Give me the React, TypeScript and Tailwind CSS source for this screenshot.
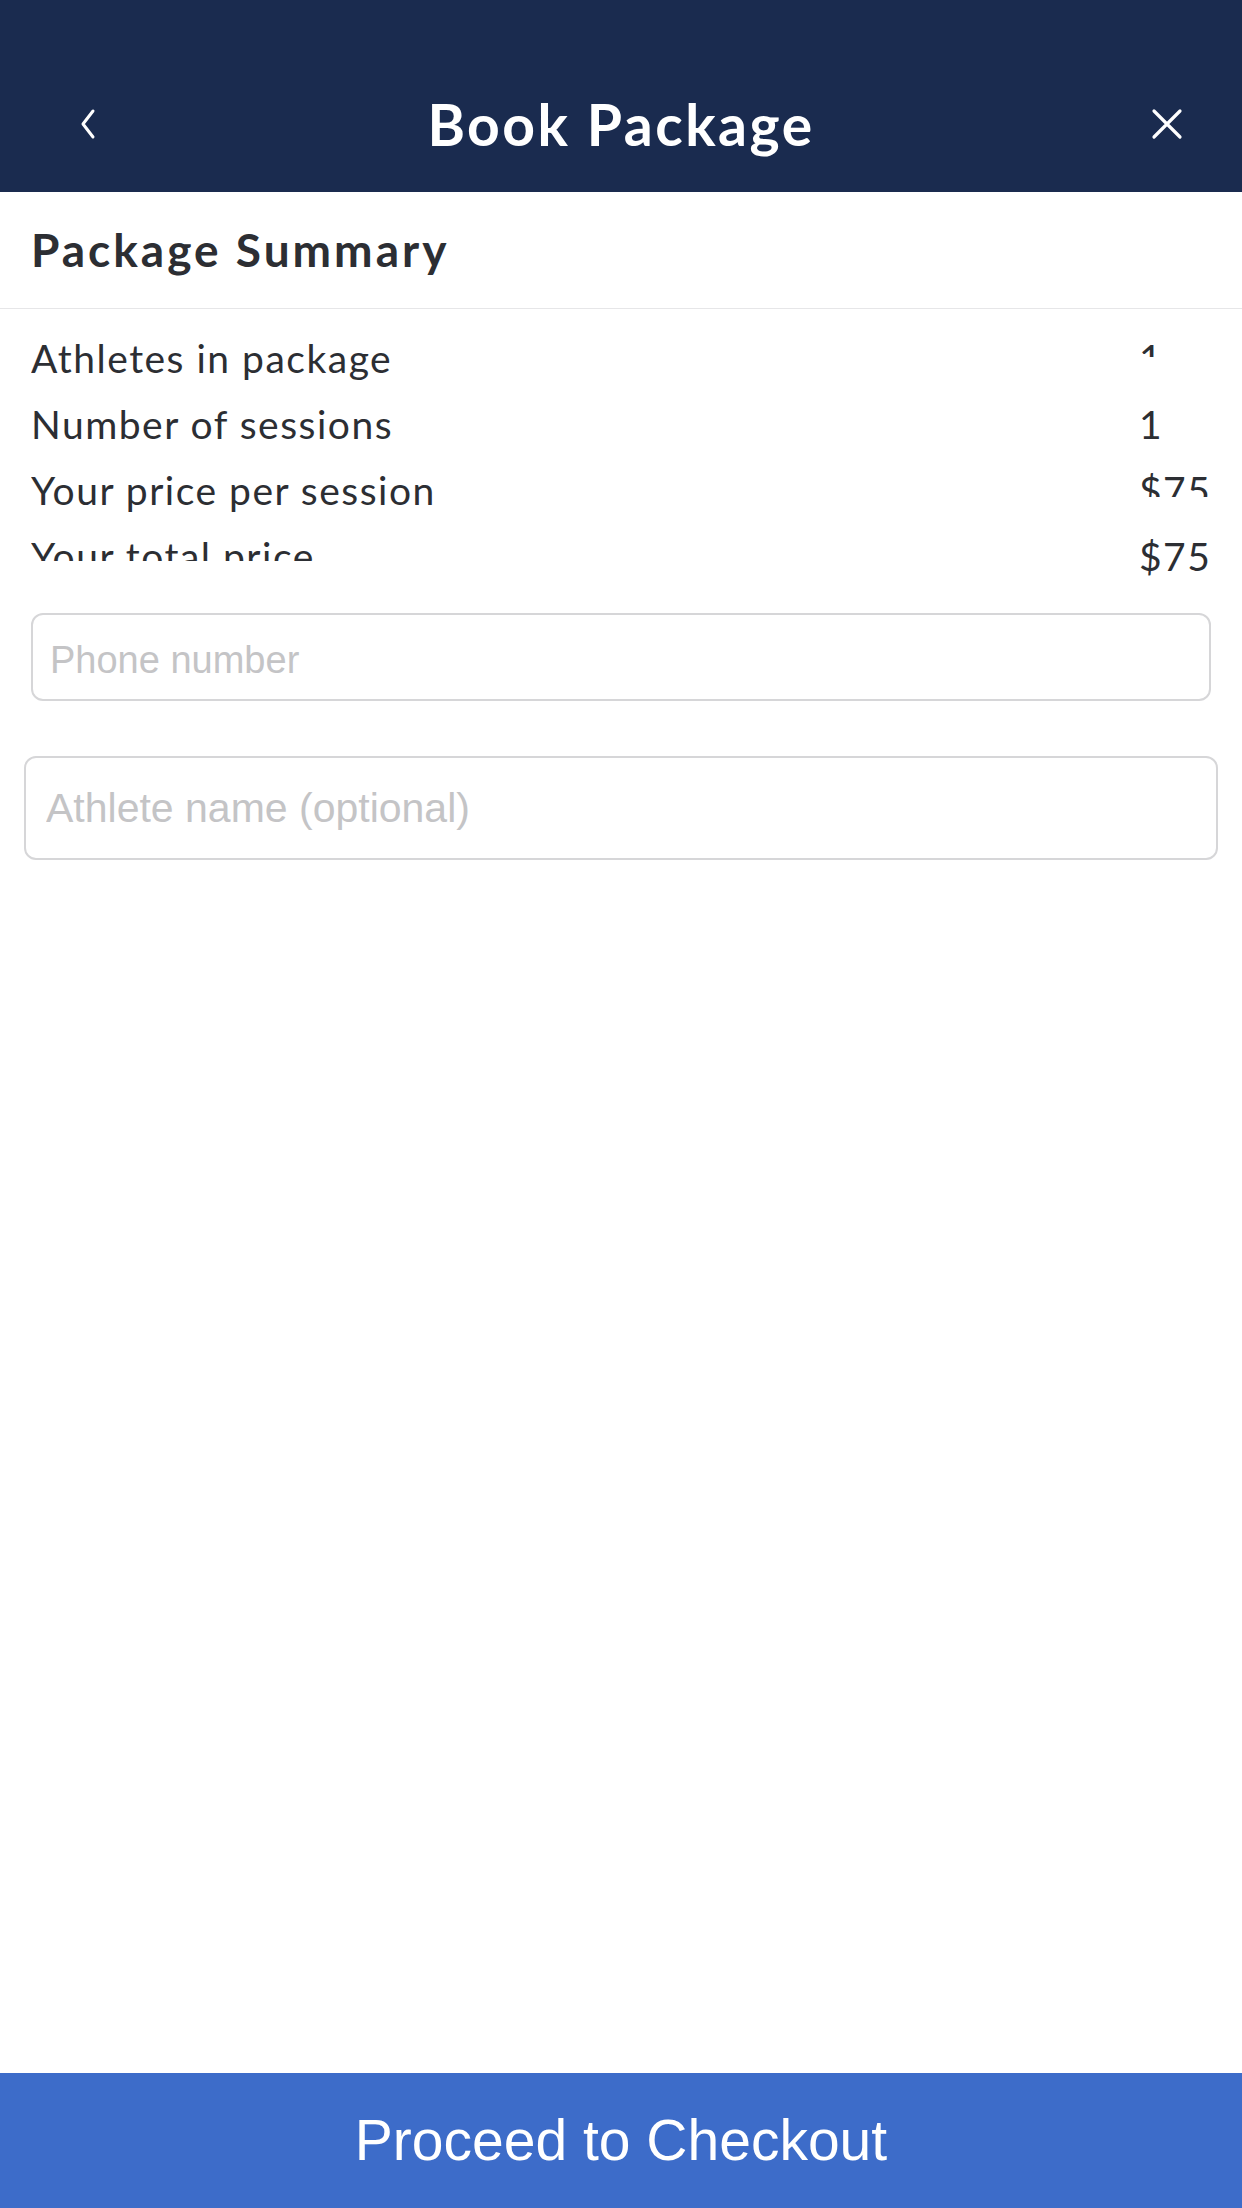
import React from 'react';

const rows = [
  { label: 'Athletes in package', value: '1', labelClip: 'h-[66px]', valueClip: 'h-[32px]' },
  { label: 'Number of sessions', value: '1', labelClip: 'h-[66px]', valueClip: 'h-[66px]' },
  { label: 'Your price per session', value: '$75', labelClip: 'h-[66px]', valueClip: 'h-[40px]' },
  { label: 'Your total price', value: '$75', labelClip: 'h-[38px]', valueClip: 'h-[66px]' },
];

const BackIcon = () => (
  <svg width="24" height="34" viewBox="0 0 24 34" fill="none">
    <polyline points="17,4 7,17 17,30" stroke="white" strokeWidth="3" strokeLinecap="round" strokeLinejoin="round" />
  </svg>
);

const CloseIcon = () => (
  <svg width="34" height="34" viewBox="0 0 34 34" fill="none">
    <path d="M4 4 L30 30 M30 4 L4 30" stroke="white" strokeWidth="3.2" strokeLinecap="round" />
  </svg>
);

export default function App() {
  const [phone, setPhone] = React.useState('');
  const [athlete, setAthlete] = React.useState('');

  return (
    <div className="flex h-[2208px] w-[1242px] flex-col bg-white font-['Lato',sans-serif] text-[#2c2e33]">
      {/* header */}
      <div className="flex h-[192px] shrink-0 items-end bg-[#1a2b4f] pb-[28px]">
        <div className="grid h-[80px] w-full grid-cols-[1fr_auto_1fr] items-center">
          <button className="flex h-[60px] items-center pl-[76px]">
            <BackIcon />
          </button>
          <h1 className="text-[57px] font-bold leading-none tracking-[2.5px] text-white">Book Package</h1>
          <button className="flex h-[60px] items-center justify-end pr-[58px]">
            <CloseIcon />
          </button>
        </div>
      </div>

      {/* summary */}
      <div className="flex h-[117px] items-center border-b border-[#e6e6e8] px-[31px]">
        <h2 className="text-[46px] font-bold leading-none tracking-[3px]">Package Summary</h2>
      </div>

      <div className="pt-[16px]">
        {rows.map((row) => (
          <div key={row.label} className="flex h-[66px] items-start pl-[31px] pr-[31px] text-[39px] tracking-[1.5px]">
            <div className={`flex-1 overflow-hidden ${row.labelClip}`}>
              <div className="leading-[66px]">{row.label}</div>
            </div>
            <div className={`w-[72px] overflow-hidden ${row.valueClip}`}>
              <div className="leading-[66px]">{row.value}</div>
            </div>
          </div>
        ))}
      </div>

      {/* form */}
      <div className="mt-[24px] px-[31px]">
        <input
          value={phone}
          onChange={(e) => setPhone(e.target.value)}
          placeholder="Phone number"
          className="h-[88px] w-full rounded-[12px] border-2 border-[#d6d6d8] px-[17px] pt-[6px] font-['Liberation_Sans',sans-serif] text-[38px] outline-none placeholder:text-[#c4c4c6]"
        />
      </div>
      <div className="mt-[55px] px-[24px]">
        <input
          value={athlete}
          onChange={(e) => setAthlete(e.target.value)}
          placeholder="Athlete name (optional)"
          className="h-[104px] w-full rounded-[12px] border-2 border-[#d6d6d8] px-[20px] font-['Liberation_Sans',sans-serif] text-[41px] outline-none placeholder:text-[#c4c4c6]"
        />
      </div>

      <div className="flex-1" />

      <button className="flex h-[135px] shrink-0 items-center justify-center bg-[#3d6cc9] font-['Liberation_Sans',sans-serif] text-[57px] text-white">
        Proceed to Checkout
      </button>
    </div>
  );
}
